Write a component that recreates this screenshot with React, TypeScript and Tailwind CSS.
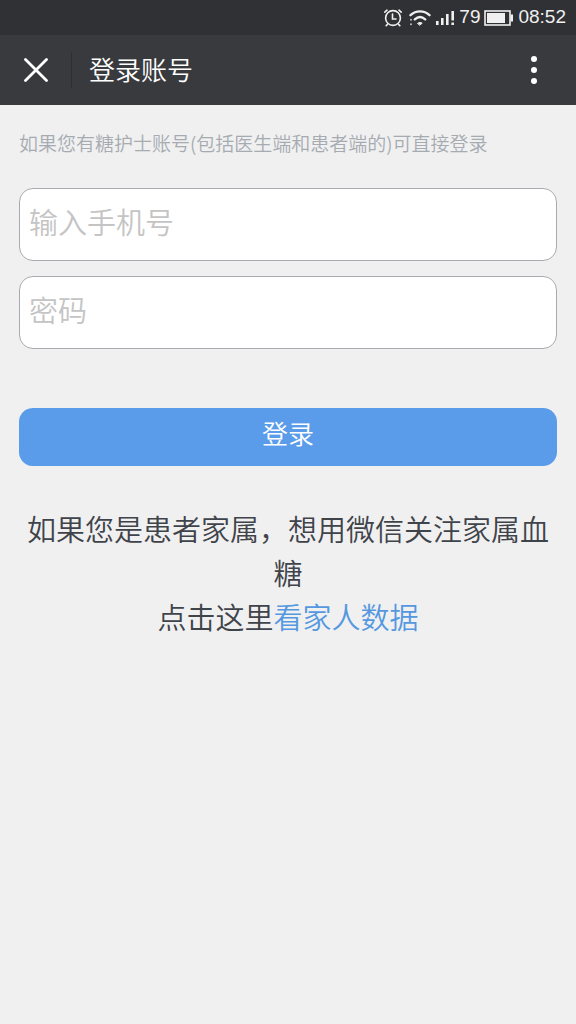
import { useState } from 'react';
import type { InputHTMLAttributes } from 'react';

// Status bar icons
function AlarmIcon() {
  return (
    <svg className="w-5 h-5" viewBox="0 0 20 20" fill="none" stroke="currentColor" strokeWidth="1.6" strokeLinecap="round">
      <circle cx="10" cy="10" r="7.4" />
      <path d="M9.5 6v5H13M1.8 4.2 4 2.2M18.2 4.2 16 2.2M4.2 16.6l-1 1M15.8 16.6l1 1" />
    </svg>
  );
}

function WifiIcon() {
  return (
    <svg className="w-[22px] h-4" viewBox="0 0 22 16" fill="none" stroke="currentColor" strokeLinecap="round">
      <path d="M1.5 5.2C7 .2 15 .2 20.5 5.2M5.8 9.4c3.2-2.9 7.2-2.9 10.4 0" strokeWidth="2.3" />
      <path d="M8.8 13.2c1.4-1 3-1 4.4 0L11 15z" fill="currentColor" strokeWidth="1" />
      <path d="M2 9.5v.5M2 14v.5" strokeWidth="1.4" />
    </svg>
  );
}

function SignalIcon() {
  return (
    <svg className="w-5 h-4" viewBox="0 0 20 16" fill="currentColor">
      <path d="M1 11h2.6v4H1zM6 8h2.6v7H6zM11 4h2.6v11H11zM16.4 1H19v9.500h-2.600zM16.4 12.500H19V15h-2.600z" />
    </svg>
  );
}

function BatteryIcon() {
  return (
    <svg className="w-[30px] h-4" viewBox="0 0 30 16">
      <rect x="1" y="1" width="25" height="14" fill="none" stroke="currentColor" strokeWidth="1.6" />
      <rect x="3" y="3" width="18" height="10" fill="currentColor" />
      <path d="M26.5 4.500H29v7h-2.500z" fill="currentColor" />
    </svg>
  );
}

function StatusBar() {
  return (
    <div className="flex h-[35px] items-center justify-end gap-1 bg-[#303135] pr-[10px] font-['Liberation_Sans',sans-serif] text-[19px] text-[#f0f0f0]">
      <div className="flex items-center gap-1">
        <span className="mr-0.5">
          <AlarmIcon />
        </span>
        <WifiIcon />
        <SignalIcon />
      </div>
      <span>79</span>
      <BatteryIcon />
      <span>08:52</span>
    </div>
  );
}

function Header() {
  return (
    <header className="flex h-[70px] items-center bg-[#393a3e] text-white">
      <button type="button" aria-label="关闭" className="flex h-full w-[71px] items-center justify-center">
        <svg className="h-6 w-6" viewBox="0 0 24 24" fill="none" stroke="currentColor" strokeWidth="2.8" strokeLinecap="round">
          <path d="M1.5 1.5l21 21M22.5 1.5l-21 21" />
        </svg>
      </button>
      <span className="h-9 w-px bg-[#2e2f33]" />
      <h1 className="ml-[17px] flex-1 pb-0.5 text-[26px] font-[350] leading-9">登录账号</h1>
      <button type="button" aria-label="更多" className="flex h-full w-[84px] items-center justify-center">
        <svg className="h-8 w-2" viewBox="0 0 8 32" fill="currentColor">
          <circle cx="4" cy="5" r="3" />
          <circle cx="4" cy="16" r="3" />
          <circle cx="4" cy="27" r="3" />
        </svg>
      </button>
    </header>
  );
}

function Field({ label, ...props }: { label: string } & InputHTMLAttributes<HTMLInputElement>) {
  return (
    <input
      aria-label={label}
      placeholder={label}
      className="block h-[73px] w-full rounded-[14px] border border-[#a9abb0] bg-white px-[9px] pb-2 text-[29px] font-[350] text-[#3f434a] outline-none placeholder:text-[#c4c4c4]"
      {...props}
    />
  );
}

export default function App() {
  const [phone, setPhone] = useState('');
  const [password, setPassword] = useState('');

  return (
    <div className="min-h-screen bg-[#f0f0f0] font-['Noto_Sans_CJK_SC',sans-serif]" lang="zh-CN">
      <StatusBar />
      <Header />
      <main className="px-[19px] pt-6 font-[350]">
        <p className="text-[19px] leading-7 text-[#a6abb2]">
          如果您有糖护士账号(包括医生端和患者端的)可直接登录
        </p>

        {/* Login form */}
        <form className="mt-[31px]" onSubmit={(e) => e.preventDefault()}>
          <div className="space-y-[15px]">
            <Field label="输入手机号" type="tel" value={phone} onChange={(e) => setPhone(e.target.value)} />
            <Field label="密码" type="password" value={password} onChange={(e) => setPassword(e.target.value)} />
          </div>
          <button
            type="submit"
            className="mt-[59px] block h-[58px] w-full rounded-[14px] bg-[#5a9cea] pb-2 text-[26px] leading-9 text-white"
          >
            登录
          </button>
        </form>

        <p className="mt-10 text-center text-[29px] leading-[44px] text-[#3f434a]">
          如果您是患者家属，想用微信关注家属血糖
          <br />
          点击这里
          <a href="#family" className="text-[#5598e0]">看家人数据</a>
        </p>
      </main>
    </div>
  );
}
